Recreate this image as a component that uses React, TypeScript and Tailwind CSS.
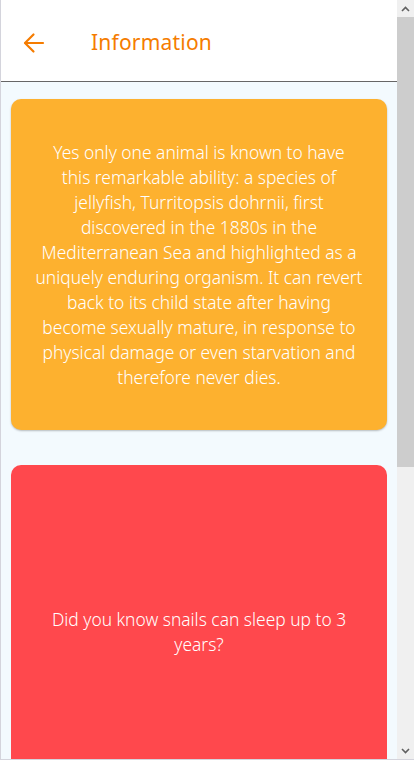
import React from "react";

const orangeLines = [
  "Yes only one animal is known to have",
  "this remarkable ability: a species of",
  "jellyfish, Turritopsis dohrnii, first",
  "discovered in the 1880s in the",
  "Mediterranean Sea and highlighted as a",
  "uniquely enduring organism. It can revert",
  "back to its child state after having",
  "become sexually mature, in response to",
  "physical damage or even starvation and",
  "therefore never dies.",
];

export default function App() {
  return (
    <div className="w-[414px] h-[760px] flex overflow-hidden border-l border-b border-[#d4d4dc] bg-white" style={{ fontFamily: '"Noto Sans", "Open Sans", sans-serif' }}>
      <div className="flex-1 flex flex-col overflow-hidden">
        <header className="h-[82px] shrink-0 flex items-center pt-[5px] bg-white border-b border-[#666666]">
          <div className="w-[90px] flex items-center pl-[21px]">
            <svg width="24" height="24" viewBox="0 0 24 24" fill="none" stroke="#F57C00" strokeWidth="2.2" strokeLinecap="round" strokeLinejoin="round">
              <path d="M21 12H3.5" />
              <path d="M11.5 3.5L3 12l8.5 8.5" />
            </svg>
          </div>
          <h1 className="text-[21px] text-[#F57C00] font-normal tracking-[0.2px]">Information</h1>
        </header>
        <main className="flex-1 bg-[#F3FAFE] px-[10px] pt-[17px] flex flex-col gap-[35px]">
          <div className="h-[331px] shrink-0 rounded-[10px] bg-[#FDB12F] shadow-[0_1px_2px_rgba(0,0,0,0.25)] flex items-center justify-center px-[10px]">
            <p className="text-white text-[17.4px] leading-[25px] text-center font-light whitespace-nowrap">
              {orangeLines.map((l, i) => (
                <React.Fragment key={i}>
                  {l}
                  {i < orangeLines.length - 1 && <br />}
                </React.Fragment>
              ))}
            </p>
          </div>
          <div className="h-[334px] shrink-0 rounded-[10px] bg-[#FF484D] flex items-center justify-center px-[10px]">
            <p className="text-white text-[17.4px] leading-[25px] text-center font-light whitespace-nowrap">
              Did you know snails can sleep up to 3
              <br />
              years?
            </p>
          </div>
        </main>
      </div>
      <div className="w-[17px] shrink-0 bg-[#F0F0F0] flex flex-col">
        <div className="h-[17px] flex items-center justify-center">
          <svg width="9" height="6" viewBox="0 0 9 6" fill="none" stroke="#606060" strokeWidth="1.6">
            <path d="M1 5l3.5-3.5L8 5" />
          </svg>
        </div>
        <div className="h-[450px] bg-[#CDCDCD]" />
        <div className="flex-1" />
        <div className="h-[17px] flex items-center justify-center">
          <svg width="9" height="6" viewBox="0 0 9 6" fill="none" stroke="#606060" strokeWidth="1.6">
            <path d="M1 1l3.5 3.5L8 1" />
          </svg>
        </div>
      </div>
    </div>
  );
}
